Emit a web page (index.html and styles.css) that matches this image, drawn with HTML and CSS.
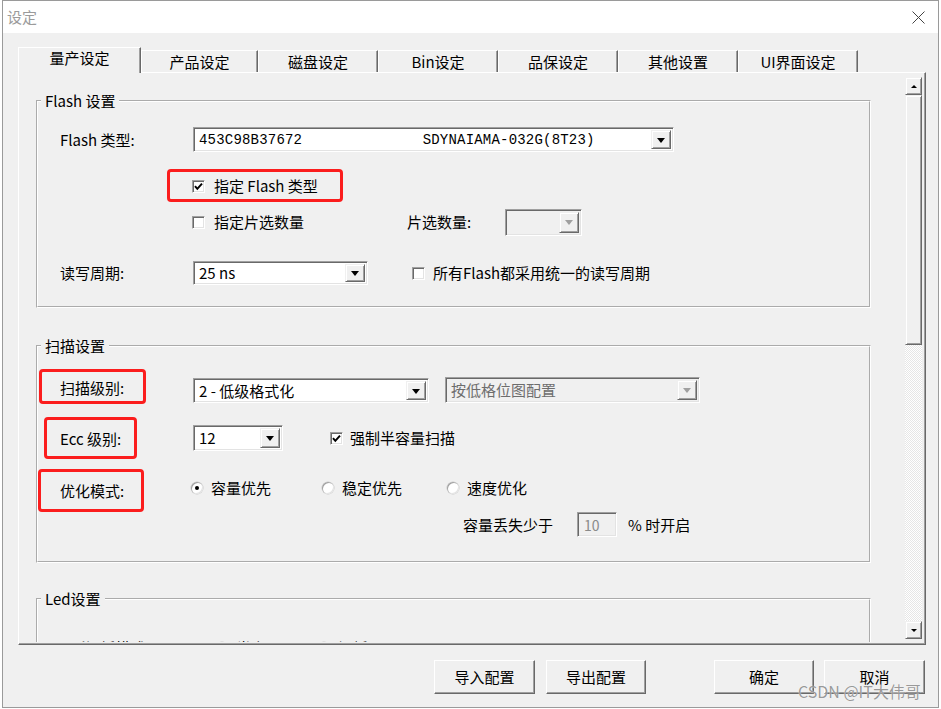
FILE: index.html
```html
<!DOCTYPE html>
<html lang="zh-CN">
<head>
<meta charset="utf-8">
<title>设定</title>
<link rel="stylesheet" href="styles.css">
</head>
<body>
<div class="window">
  <div class="titlebar">
    <span class="title">设定</span>
    <svg class="close" viewBox="0 0 13 13" width="13" height="13"><path d="M0.5 0.5L12.5 12.5M12.5 0.5L0.5 12.5" stroke="#444" stroke-width="1" fill="none"/></svg>
  </div>
  <div class="client">
    <div class="tabs">
      <div class="tab active w123">量产设定</div>
      <div class="tab w117">产品设定</div>
      <div class="tab w120">磁盘设定</div>
      <div class="tab w120">Bin设定</div>
      <div class="tab w120">品保设定</div>
      <div class="tab w120">其他设置</div>
      <div class="tab w120">UI界面设定</div>
    </div>
    <div class="panel">
      <div class="content">
        <fieldset class="group g-flash">
          <legend>Flash 设置</legend>
          <div class="flash-body">
            <div class="row r1">
              <span class="lbl lbl133">Flash 类型:</span>
              <div class="combo c-type"><span class="val mono">453C98B37672              SDYNAIAMA-032G(8T23)</span><span class="dd"><i class="tri"></i></span></div>
            </div>
            <div class="row r2">
              <div class="redbox rb-flash">
                <span class="cb"><svg viewBox="0 0 11 11"><path d="M2 5.2L4.3 7.8L9 2.6" stroke="#000" stroke-width="2" fill="none"/></svg></span>
                <span class="cb-lbl">指定 Flash 类型</span>
              </div>
            </div>
            <div class="row r3">
              <div class="check w215">
                <span class="cb"></span>
                <span class="cb-lbl">指定片选数量</span>
              </div>
              <span class="lbl lbl98">片选数量:</span>
              <div class="combo disabled c-cs"><span class="val"></span><span class="dd"><i class="tri gray"></i></span></div>
            </div>
            <div class="row r4">
              <span class="lbl lbl133">读写周期:</span>
              <div class="combo c-rw"><span class="val">25 ns</span><span class="dd"><i class="tri"></i></span></div>
              <div class="check ml44">
                <span class="cb"></span>
                <span class="cb-lbl gap8">所有Flash都采用统一的读写周期</span>
              </div>
            </div>
          </div>
        </fieldset>

        <fieldset class="group g-scan">
          <legend>扫描设置</legend>
          <div class="scan-body">
            <div class="srow sa">
              <div class="redbox rb-a"><span class="lbl">扫描级别:</span></div>
              <div class="combo c-level"><span class="val">2 - 低级格式化</span><span class="dd"><i class="tri"></i></span></div>
              <div class="combo disabled c-bitmap"><span class="val">按低格位图配置</span><span class="dd"><i class="tri gray"></i></span></div>
            </div>
            <div class="srow sb">
              <div class="redbox rb-b"><span class="lbl">Ecc 级别:</span></div>
              <div class="combo c-ecc"><span class="val">12</span><span class="dd"><i class="tri"></i></span></div>
              <div class="check c-half">
                <span class="cb"><svg viewBox="0 0 11 11"><path d="M2 5.2L4.3 7.8L9 2.6" stroke="#000" stroke-width="2" fill="none"/></svg></span>
                <span class="cb-lbl gap7">强制半容量扫描</span>
              </div>
            </div>
            <div class="srow sc">
              <div class="redbox rb-c"><span class="lbl">优化模式:</span></div>
              <div class="radios">
                <div class="radio w131"><span class="rd on"></span><span>容量优先</span></div>
                <div class="radio w125"><span class="rd"></span><span>稳定优先</span></div>
                <div class="radio"><span class="rd"></span><span>速度优化</span></div>
              </div>
            </div>
            <div class="srow sd">
              <span class="lbl lbl114">容量丢失少于</span>
              <div class="edit">10</div>
              <span class="lbl pct">% 时开启</span>
            </div>
          </div>
        </fieldset>

        <fieldset class="group g-led">
          <legend>Led设置</legend>
          <div class="led-body">
            <span class="lbl lbl156">Led闪烁模式:</span>
            <div class="radio w102"><span class="rd on"></span><span>常亮</span></div>
            <div class="radio"><span class="rd"></span><span>闪烁</span></div>
          </div>
        </fieldset>
      </div>
      <div class="vscroll">
        <div class="sbtn"><i class="stri up"></i></div>
        <div class="thumb"></div>
        <div class="track"></div>
        <div class="sbtn"><i class="stri down"></i></div>
      </div>
    </div>
    <div class="buttons">
      <div class="btn w101">导入配置</div>
      <div class="btn w100 ml11">导出配置</div>
      <div class="btn w100 ml68">确定</div>
      <div class="btn w101 ml10">取消</div>
    </div>
    <div class="watermark">CSDN @IT大伟哥</div>
  </div>
</div>
</body>
</html>
```

FILE: styles.css
```css
* { box-sizing: border-box; }
html, body { margin: 0; padding: 0; background: #ffffff; }
body {
  font-family: "Noto Sans CJK SC", "Noto Sans", sans-serif;
  font-size: 15px;
  line-height: 20px;
  color: #000;
}

.window {
  margin-left: 2px;
  width: 937px;
  height: 708px;
  border: 1px solid #9a9a9a;
  background: #f0f0f0;
  display: flex;
  flex-direction: column;
}

.titlebar {
  height: 32px;
  flex: none;
  background: #fff;
  display: flex;
  align-items: center;
  justify-content: space-between;
  padding: 0 13px 0 4px;
}
.title { color: #9b9b9b; font-size: 15px; }
.close { display: block; }

.client {
  position: relative;
  flex: 1;
  padding: 14px 0 0 15px;
}

/* tabs */
.tabs {
  display: flex;
  align-items: flex-end;
  height: 25px;
}
.tab {
  height: 22px;
  padding-top: 1px;
  text-align: center;
  border-top: 1px solid #fff;
  border-left: 1px solid #fff;
  border-right: 1px solid #696969;
  box-shadow: inset -1px 0 0 #a0a0a0;
  background: #f0f0f0;
  white-space: nowrap;
}
.tab.active {
  height: 26px;
  margin-bottom: -1px;
  position: relative;
  z-index: 1;
  padding-top: 0;
}
.w123 { width: 123px; }
.w117 { width: 117px; }
.w120 { width: 120px; }

/* panel */
.panel {
  width: 908px;
  height: 573px;
  display: flex;
  border-top: 1px solid #fff;
  border-left: 1px solid #fff;
  border-right: 1px solid #696969;
  border-bottom: 1px solid #696969;
  box-shadow: inset -1px -1px 0 #a0a0a0;
  padding: 0 3px 2px 0;
}
.content {
  width: 886px;
  height: 569px;
  overflow: hidden;
  padding: 18px 0 0 17px;
}

/* groups */
.group {
  margin: 0;
  padding: 0;
  width: 835px;
  min-width: 0;
  border: 2px groove #ffffff;
}
.group legend {
  margin-left: 3px;
  padding: 0 4px;
  line-height: 20px;
  font-size: 15px;
}
.g-scan { margin-top: 28px; }
.g-led { margin-top: 26px; }

.flash-body { padding: 16px 0 21px 22px; }
.row { display: flex; align-items: center; }
.r1 { height: 25px; }
.r2 { margin-top: 17px; }
.r3 { margin-top: 7px; height: 26px; }
.r4 { margin-top: 26px; height: 24px; }

.lbl { white-space: nowrap; }
.lbl133 { width: 133px; flex: none; }
.lbl98 { width: 98px; flex: none; }
.lbl114 { width: 114px; flex: none; }
.lbl156 { width: 156px; flex: none; }

/* red annotation boxes */
.redbox {
  border: 3px solid #fb1d1d;
  border-radius: 4px;
  display: flex;
  align-items: center;
  flex: none;
}
.rb-flash { margin-left: 107px; width: 176px; height: 33px; padding-left: 22px; padding-top: 1px; }
.rb-a { margin-left: 1px; margin-top: 2px; width: 107px; height: 35px; padding-left: 18px; padding-top: 2px; }
.rb-b { margin-left: 6px; margin-top: 8px; width: 93px; height: 42px; padding-left: 13px; padding-top: 1px; }
.rb-c { margin-left: 0; margin-top: 8px; width: 106px; height: 43px; padding-left: 19px; padding-top: 1px; }

/* checkboxes */
.check { display: flex; align-items: center; flex: none; }
.r3 .check { margin-left: 132px; }
.w215 { width: 215px; }
.ml44 { margin-left: 44px; }
.cb {
  width: 13px;
  height: 13px;
  flex: none;
  background: #fff;
  border: 1px solid;
  border-color: #a0a0a0 #ffffff #ffffff #a0a0a0;
  box-shadow: inset 1px 1px 0 #696969, inset -1px -1px 0 #e3e3e3;
  position: relative;
}
.cb svg { display: block; width: 11px; height: 11px; }
.cb-lbl { margin-left: 9px; white-space: nowrap; }
.cb-lbl.gap8 { margin-left: 8px; }
.cb-lbl.gap7 { margin-left: 7px; }

/* combos */
.combo {
  display: flex;
  flex: none;
  background: #fff;
  border: 1px solid;
  border-color: #a0a0a0 #ffffff #ffffff #a0a0a0;
  box-shadow: inset 1px 1px 0 #696969, inset -1px -1px 0 #e3e3e3;
  padding: 2px;
}
.combo.disabled { background: #f0f0f0; color: #6d6d6d; }
.combo .val {
  flex: 1;
  padding-left: 3px;
  display: flex;
  align-items: center;
  white-space: pre;
  overflow: hidden;
  line-height: 18px;
}
.mono {
  font-family: "Liberation Mono", monospace;
  font-size: 14px;
  letter-spacing: 0.2px;
}
.combo .dd {
  width: 20px;
  flex: none;
  background: #f0f0f0;
  border: 1px solid;
  border-color: #f0f0f0 #696969 #696969 #f0f0f0;
  box-shadow: inset 1px 1px 0 #fff, inset -1px -1px 0 #a0a0a0;
  display: flex;
  align-items: center;
  justify-content: center;
}
.tri {
  width: 0;
  height: 0;
  border-left: 4px solid transparent;
  border-right: 4px solid transparent;
  border-top: 5px solid #000;
  margin-top: 1px;
}
.tri.gray { border-top-color: #a0a0a0; }

.c-type { width: 481px; height: 25px; }
.c-cs { width: 77px; height: 27px; }
.c-rw { width: 175px; height: 24px; }
.c-level { width: 236px; height: 25px; margin-left: 47px; margin-top: 11px; }
.c-bitmap { width: 255px; height: 26px; margin-left: 16px; margin-top: 10px; }
.c-ecc { width: 90px; height: 26px; margin-left: 56px; margin-top: 16px; }
.c-half { height: 26px; margin-left: 47px; margin-top: 16px; }

/* scan group */
.scan-body { padding: 11px 0 24px 0; }
.srow { display: flex; align-items: flex-start; }
.sa { height: 42px; }
.sb { height: 52px; }
.sc { height: 51px; }
.sd { height: 25px; align-items: center; padding-left: 425px; }

.radios { display: flex; margin-left: 47px; margin-top: 17px; }
.radio { display: flex; align-items: center; height: 20px; flex: none; white-space: nowrap; }
.w131 { width: 131px; }
.w125 { width: 125px; }
.w102 { width: 102px; }
.rd {
  width: 12px;
  height: 12px;
  border-radius: 50%;
  background: #fff;
  box-shadow: inset 1px 1px 0 #a0a0a0, inset -1px -1px 0 #e3e3e3, 0 0 0 0.5px #c8c8c8;
  margin-right: 8px;
  position: relative;
  flex: none;
}
.rd.on::after {
  content: "";
  position: absolute;
  left: 4px;
  top: 4px;
  width: 4px;
  height: 4px;
  border-radius: 50%;
  background: #000;
}

.edit {
  width: 40px;
  height: 25px;
  flex: none;
  border: 1px solid;
  border-color: #a0a0a0 #ffffff #ffffff #a0a0a0;
  box-shadow: inset 1px 1px 0 #696969, inset -1px -1px 0 #e3e3e3;
  color: #8a8a8a;
  font-size: 14px;
  line-height: 18px;
  padding-left: 6px;
  display: flex;
  align-items: center;
}
.pct { margin-left: 11px; }

/* led group */
.led-body {
  display: flex;
  align-items: flex-start;
  padding: 29px 0 0 22px;
  height: 80px;
}

/* scrollbar */
.vscroll {
  width: 17px;
  flex: none;
  margin-top: 4px;
  height: 562px;
  display: flex;
  flex-direction: column;
}
.sbtn, .thumb {
  background: #f0f0f0;
  border: 1px solid;
  border-color: #f0f0f0 #696969 #696969 #f0f0f0;
  box-shadow: inset 1px 1px 0 #fff, inset -1px -1px 0 #a0a0a0;
}
.sbtn {
  height: 18px;
  flex: none;
  display: flex;
  align-items: center;
  justify-content: center;
}
.thumb { height: 250px; flex: none; }
.track {
  flex: 1;
  background: repeating-conic-gradient(#ffffff 0 25%, #e6e6e6 0 50%) 0 0 / 2px 2px;
}
.stri {
  width: 0;
  height: 0;
  border-left: 3px solid transparent;
  border-right: 3px solid transparent;
}
.stri.up { border-bottom: 3px solid #000; }
.stri.down { border-top: 3px solid #000; }

/* dialog buttons */
.buttons {
  display: flex;
  margin-top: 15px;
  padding-left: 416px;
}
.btn {
  height: 34px;
  flex: none;
  background: #f0f0f0;
  border: 1px solid;
  border-color: #ffffff #696969 #696969 #ffffff;
  box-shadow: inset -1px -1px 0 #a0a0a0;
  display: flex;
  align-items: center;
  justify-content: center;
}
.w101 { width: 101px; }
.w100 { width: 100px; }
.ml11 { margin-left: 11px; }
.ml68 { margin-left: 68px; }
.ml10 { margin-left: 10px; }

.watermark {
  position: absolute;
  left: 795px;
  top: 648px;
  font-size: 16px;
  line-height: 20px;
  color: rgba(120, 120, 120, 0.75);
  text-shadow: 0 0 1px #fff;
  white-space: nowrap;
}
```
